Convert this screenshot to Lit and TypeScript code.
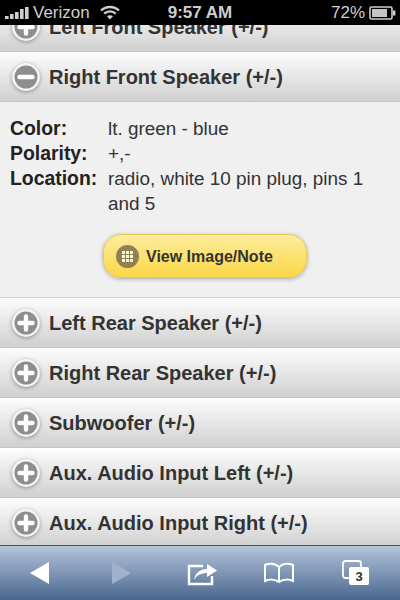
import { LitElement, html, css, svg } from 'lit';
import { customElement } from 'lit/decorators.js';

const sections = [
  'Left Rear Speaker (+/-)',
  'Right Rear Speaker (+/-)',
  'Subwoofer (+/-)',
  'Aux. Audio Input Left (+/-)',
  'Aux. Audio Input Right (+/-)',
];

const details = [
  ['Color:', 'lt. green - blue'],
  ['Polarity:', '+,-'],
  ['Location:', 'radio, white 10 pin plug, pins 1 and 5'],
];

@customElement('app-root')
export class AppRoot extends LitElement {
  static styles = css`
    :host {
      display: flex;
      flex-direction: column;
      width: 400px;
      height: 600px;
      overflow: hidden;
      font-family: 'Liberation Sans', Arial, sans-serif;
      background: #f0f0f0;
    }
    .status {
      flex: none;
      height: 25px;
      background: #000;
      color: #cfcfcf;
      display: grid;
      grid-template-columns: 1fr auto 1fr;
      align-items: center;
      font-size: 17px;
      line-height: 25px;
      position: relative;
      z-index: 2;
    }
    .status-left {
      display: flex;
      align-items: center;
      padding-left: 5px;
      gap: 4px;
    }
    .status-right {
      display: flex;
      align-items: center;
      justify-content: flex-end;
      gap: 4px;
      padding-right: 4px;
    }
    .clock {
      font-weight: bold;
      font-size: 17px;
    }
    .wifi {
      margin-left: 6px;
    }
    .list {
      flex: 1;
      min-height: 0;
      overflow: hidden;
    }
    .first {
      margin-top: -23px;
    }
    .row {
      box-sizing: border-box;
      height: 50px;
      display: flex;
      align-items: center;
      gap: 9px;
      padding: 0 0 0 12px;
      border-top: 1px solid #fff;
      border-bottom: 1px solid #c4c4c4;
      background: linear-gradient(#fcfcfc, #d0d0d0);
      color: #333;
      font-size: 20px;
      font-weight: bold;
    }
    .row svg {
      flex: none;
      filter: drop-shadow(0 1px 2px rgba(0, 0, 0, 0.35));
    }
    .body {
      box-sizing: border-box;
      height: 196px;
      padding: 14px 10px 0 10px;
      background: #f0f0f0;
      border-bottom: 1px solid #cfcfcf;
      color: #222;
      font-size: 18.9px;
      line-height: 25px;
    }
    .details {
      display: grid;
      grid-template-columns: 98px 1fr;
      margin: 0;
    }
    .details dt {
      font-weight: bold;
      font-size: 19.4px;
      white-space: nowrap;
    }
    .details dd {
      margin: 0;
      color: #333;
    }
    .action {
      display: flex;
      justify-content: center;
      padding: 18px 0 0 10px;
    }
    .button {
      box-sizing: border-box;
      width: 204px;
      height: 44px;
      display: flex;
      align-items: center;
      gap: 7px;
      padding-left: 12px;
      border-radius: 18px;
      border: 1px solid #e6c75a;
      background: linear-gradient(#fcec9d, #fbd746);
      box-shadow: 0 1px 4px rgba(0, 0, 0, 0.3);
      color: #333;
      font-size: 16px;
      font-weight: bold;
    }
    .toolbar {
      flex: none;
      height: 55px;
      box-sizing: border-box;
      border-top: 1px solid #3f5374;
      background: linear-gradient(#b4c4da, #4a678f);
      display: grid;
      grid-template-columns: 80px 81px 82px 72px 1fr;
      align-items: center;
      justify-items: center;
    }
    .toolbar svg {
      display: block;
    }
    .tabs {
      transform: translateX(-2px);
    }
    .badge-text {
      font-size: 13px;
      font-weight: bold;
      fill: #333;
    }
  `;

  private roundIcon(open: boolean) {
    return html`<svg width="28" height="28" viewBox="0 0 28 28">
      <circle cx="14" cy="14" r="12.7" fill="#8e8e8e" stroke="#f6f6f6" stroke-width="2.4"></circle>
      <path
        d=${open ? 'M7.5 14H20.5' : 'M7.5 14H20.5M14 7.5V20.5'}
        stroke="#fff"
        stroke-width="4.4"
        stroke-linecap="round"
        fill="none"
      ></path>
    </svg>`;
  }

  private row(label: string, open = false, extra = '') {
    return html`<div class="row ${extra}">${this.roundIcon(open)}<span>${label}</span></div>`;
  }

  private signal() {
    const bars = [3, 5, 7, 10, 12];
    return html`<svg width="24" height="14" viewBox="0 0 24 14">
      ${bars.map(
        (h, i) => svg`<rect x=${i * 5} y=${13 - h} width="3.6" height=${h} fill="#cfcfcf"></rect>`,
      )}
    </svg>`;
  }

  private gridIcon() {
    const cells = [0, 1, 2].flatMap((y) => [0, 1, 2].map((x) => [x, y]));
    return html`<svg width="23" height="23" viewBox="0 0 23 23">
      <circle cx="11.5" cy="11.5" r="11.5" fill="#8f8250"></circle>
      ${cells.map(
        ([x, y]) =>
          svg`<rect x=${6 + x * 4} y=${6 + y * 4} width="3" height="3" fill="#fdf7dc"></rect>`,
      )}
    </svg>`;
  }

  render() {
    return html`
      <div class="status">
        <div class="status-left">
          ${this.signal()}<span>Verizon</span>
          <svg class="wifi" width="20" height="15" viewBox="0 0 20 15" fill="none" stroke="#cfcfcf" stroke-width="2.4">
            <path d="M1 5.5C6 .8 14 .8 19 5.5"></path>
            <path d="M4.2 8.6C7.5 5.6 12.5 5.6 15.8 8.6"></path>
            <path d="M10 14.5 7 11.3C8.7 9.9 11.3 9.9 13 11.3Z" fill="#cfcfcf" stroke="none"></path>
          </svg>
        </div>
        <div class="clock">9:57 AM</div>
        <div class="status-right">
          <span>72%</span>
          <svg width="27" height="14" viewBox="0 0 27 14">
            <rect x="1" y="1" width="22" height="12" rx="1.5" fill="none" stroke="#cfcfcf" stroke-width="1.6"></rect>
            <rect x="3" y="3" width="15" height="8" fill="#c4c4c4"></rect>
            <rect x="24" y="4.5" width="2.4" height="5" fill="#cfcfcf"></rect>
          </svg>
        </div>
      </div>

      <div class="list">
        ${this.row('Left Front Speaker (+/-)', false, 'first')}
        ${this.row('Right Front Speaker (+/-)', true)}
        <div class="body">
          <dl class="details">
            ${details.map(([k, v]) => html`<dt>${k}</dt><dd>${v}</dd>`)}
          </dl>
          <div class="action">
            <div class="button">${this.gridIcon()}<span>View Image/Note</span></div>
          </div>
        </div>
        ${sections.map((s) => this.row(s))}
      </div>

      <div class="toolbar">
        <svg width="22" height="24" viewBox="0 0 22 24"><path d="M1 12 20 1V23Z" fill="#fff"></path></svg>
        <svg width="22" height="24" viewBox="0 0 22 24"><path d="M21 12 2 1V23Z" fill="#a3b2cb"></path></svg>
        <svg width="31" height="26" viewBox="0 0 31 26" fill="none">
          <path d="M16 6H2V24H25V16" stroke="#fff" stroke-width="2.4"></path>
          <path d="M7 20C8 13 13 9 20 9V4L30 10.5 20 17V13C14 13 10 15 7 20Z" fill="#fff"></path>
        </svg>
        <svg width="32" height="22" viewBox="0 0 32 22" fill="none" stroke="#fff" stroke-width="2">
          <path d="M16 5C12 1 6 1 2 3V19C6 17 12 17 16 20C20 17 26 17 30 19V3C26 1 20 1 16 5V20"></path>
        </svg>
        <svg class="tabs" width="28" height="26" viewBox="0 0 28 26">
          <rect x="1" y="1" width="18" height="17" rx="2.5" fill="none" stroke="#fff" stroke-width="1.8"></rect>
          <rect x="7" y="7" width="20" height="18" rx="2" fill="#fff"></rect>
          <text class="badge-text" x="17" y="21" text-anchor="middle">3</text>
        </svg>
      </div>
    `;
  }
}
